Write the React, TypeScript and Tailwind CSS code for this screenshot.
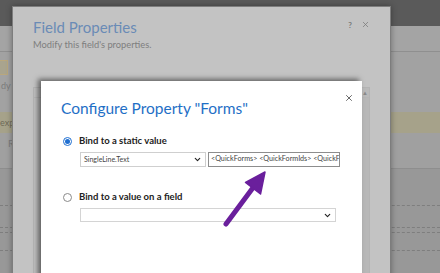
import { ChevronDown, X } from "lucide-react";

const font = { fontFamily: 'Lato, "Open Sans", sans-serif' };

function Radio({ checked }: { checked?: boolean }) {
  return (
    <span
      className={
        "flex h-[9px] w-[9px] items-center justify-center rounded-full border " +
        (checked ? "border-[#1f6fd1] bg-white" : "border-[#8a8a8a] bg-white")
      }
    >
      {checked && <span className="h-[5px] w-[5px] rounded-full bg-[#1f6fd1]" />}
    </span>
  );
}

export default function App() {
  return (
    <div className="relative h-[273px] w-[440px] overflow-hidden bg-[#9a9a9a]" style={font}>
      {/* page behind the dialogs */}
      <div className="flex h-full flex-col">
        <div className="h-[26px] bg-[#5a5a5a]" />
        <div className="h-[26px] border-b border-[#8f8f8f] bg-[#a4a4a4]" />
        <div className="flex h-[60px] flex-col bg-[#a2a2a2] pt-[8px]">
          <div className="h-[15px] w-[8px] border border-l-0 border-[#b9a77d] bg-[#a9a48e]" />
          <span className="pl-[1px] pt-[6px] text-[9px] leading-none text-[#7c7c7c]">dy</span>
        </div>
        <div className="flex h-[21px] items-center bg-[#a6a28a] text-[9px] text-[#6e6a58]">
          <span>exp</span>
        </div>
        <div className="h-[35px] bg-[#a0a0a0] pl-[8px] pt-[5px] text-[10px] leading-none text-[#7c7c7c]">Re</div>
        <div className="flex flex-1 flex-col border-t border-[#8e8e8e] bg-[#989898]">
          <div className="mt-[36px] border-t border-dashed border-[#7e7e7e]" />
          <div className="mt-[21px] border-t border-dashed border-[#7e7e7e]" />
          <div className="mt-[4px] border-t border-dashed border-[#7e7e7e]" />
          <div className="mt-[17px] border-t border-dashed border-[#7e7e7e]" />
        </div>
      </div>

      {/* Field Properties dialog (dimmed) */}
      <div className="absolute left-[12px] top-[6px] flex h-[280px] w-[379px] flex-col border border-[#7d7d7d] bg-[#c3c3c3] px-[20px] pt-[8px] shadow-[0_0_6px_rgba(0,0,0,0.35)]">
        <div className="flex items-start justify-between">
          <div>
            <div className="text-[15px] leading-[24px] text-[#6a8bb6]">Field Properties</div>
            <div className="text-[9.3px] leading-[12px] text-[#7e7e7e]">Modify this field's properties.</div>
          </div>
          <div className="mr-[0px] mt-[5px] flex items-center gap-[9px] text-[#7a7a7a]">
            <span className="text-[8px] font-bold leading-none">?</span>
            <X size={9} strokeWidth={2} />
          </div>
        </div>
        <div className="mt-[36px] flex flex-1 flex-col border border-[#b4b4b4] bg-[#c0c0c0]">
          <div className="flex h-[10px] border-b border-[#b6b6b6]">
            <div className="w-[36px] border-r border-[#b6b6b6]" />
            <div className="w-[49px] border-r border-[#b6b6b6]" />
            <div className="w-[35px] border-r border-[#b6b6b6]" />
            <div className="w-[35px] border-r border-[#b6b6b6]" />
            <div className="flex-1" />
            <div className="w-[9px] border-l border-[#b0b0b0] bg-[#bababa] text-center text-[6px] leading-[10px] text-[#8a8a8a]">▲</div>
          </div>
          <div className="flex flex-1 justify-end">
            <div className="w-[9px] border-l border-[#b0b0b0] bg-[#b8b8b8]" />
          </div>
        </div>
      </div>

      {/* Configure Property dialog */}
      <div className="absolute left-[41px] top-[81px] h-[200px] w-[321px] bg-white px-[20px] pt-[14px] shadow-[-3px_-2px_5px_rgba(0,0,0,0.5)]">
        <div className="flex items-start justify-between">
          <div className="text-[15.5px] leading-[26px] text-[#1f6fc6]">Configure Property "Forms"</div>
          <X size={10} strokeWidth={2} className="mr-[-12px] mt-[-2px] text-[#4a4a4a]" />
        </div>

        <div className="mt-[13px] flex items-center gap-[7px] pl-[2px]">
          <Radio checked />
          <span className="text-[9.5px] font-bold leading-[14px] text-[#222]">Bind to a static value</span>
        </div>
        <div className="mt-[4px] flex gap-[2px] pl-[19px]">
          <div className="flex h-[15px] w-[126px] items-center justify-between border border-[#cfcfcf] pl-[3px] pr-[3px]">
            <span className="text-[7px] text-[#444]">SingleLine.Text</span>
            <ChevronDown size={9} strokeWidth={3} className="text-[#222]" />
          </div>
          <div className="flex h-[15px] w-[132px] items-center overflow-hidden whitespace-nowrap border border-[#8d8d8d] pl-[2px]">
            <span className="text-[7.2px] text-[#444]">&lt;QuickForms&gt; &lt;QuickFormIds&gt; &lt;QuickForm</span>
          </div>
        </div>

        <div className="mt-[23px] flex items-center gap-[7px] pl-[2px]">
          <Radio />
          <span className="text-[9.5px] font-bold leading-[14px] text-[#222]">Bind to a value on a field</span>
        </div>
        <div className="mt-[4px] pl-[19px]">
          <div className="flex h-[14px] w-[256px] items-center justify-end border border-[#d4d4d4] pr-[3px]">
            <ChevronDown size={9} strokeWidth={3} className="text-[#222]" />
          </div>
        </div>
      </div>

      {/* annotation arrow */}
      <svg className="absolute left-[215px] top-[165px]" width="60" height="70" viewBox="0 0 60 70">
        <line x1="11" y1="59" x2="40" y2="20" stroke="#6a1f9c" strokeWidth="5" strokeLinecap="round" />
        <polygon points="50,7 45.5,29 30.5,17.5" fill="#6a1f9c" stroke="#6a1f9c" strokeWidth="1.5" strokeLinejoin="round" />
      </svg>
    </div>
  );
}
